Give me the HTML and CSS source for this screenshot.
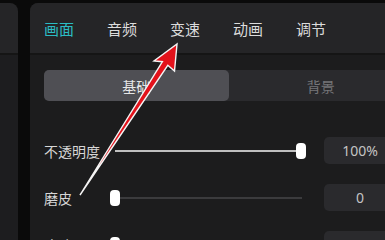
FILE: index.html
```html
<!DOCTYPE html>
<html lang="zh">
<head>
<meta charset="utf-8">
<link rel="stylesheet" href="styles.css">
</head>
<body>
<div class="app">
  <div class="side">
    <div class="side-head"></div>
    <div class="side-body"></div>
  </div>
  <div class="main">
    <div class="tabs">
      <span class="tab active">画面</span>
      <span class="tab">音频</span>
      <span class="tab">变速</span>
      <span class="tab">动画</span>
      <span class="tab">调节</span>
    </div>
    <div class="content">
      <div class="segment">
        <div class="seg on">基础</div>
        <div class="seg">背景</div>
      </div>
      <div class="rows">
        <div class="row">
          <span class="label">不透明度</span>
          <div class="slider">
            <div class="track full"></div>
            <div class="knob end"></div>
          </div>
          <div class="value">100%</div>
        </div>
        <div class="row">
          <span class="label">磨皮</span>
          <div class="slider">
            <div class="track"></div>
            <div class="knob"></div>
          </div>
          <div class="value">0</div>
        </div>
        <div class="row">
          <span class="label">瘦脸</span>
          <div class="slider">
            <div class="track"></div>
            <div class="knob"></div>
          </div>
          <div class="value">0</div>
        </div>
      </div>
    </div>
  </div>
</div>
<svg class="arrow" width="385" height="240" viewBox="0 0 385 240">
  <polygon points="80,195 167.8,65.3 174.5,71 177,44 154,61 162.4,61.7" fill="#e3121b" stroke="#f4f4f4" stroke-width="1.4" stroke-linejoin="miter"/>
</svg>
</body>
</html>
```
FILE: styles.css
```css
html, body {
  margin: 0;
  padding: 0;
  width: 385px;
  height: 240px;
  overflow: hidden;
  background: #0a0a0a;
  font-family: "Noto Sans CJK SC", "Noto Sans", sans-serif;
}
.app {
  display: flex;
  height: 240px;
  padding-top: 3px;
  box-sizing: border-box;
}
.side {
  width: 18px;
  flex: none;
  border-top-right-radius: 8px;
  overflow: hidden;
  display: flex;
  flex-direction: column;
}
.side-head {
  flex: none;
  height: 50px;
  background: #252527;
  border-bottom: 2px solid #151515;
}
.side-body {
  flex: 1;
  background: #1d1d1f;
}
.main {
  margin-left: 12px;
  flex: 1;
  min-width: 0;
  border-top-left-radius: 8px;
  overflow: hidden;
  background: #1c1c1d;
  display: flex;
  flex-direction: column;
}
.tabs {
  flex: none;
  height: 50px;
  background: #252527;
  border-bottom: 2px solid #151515;
  display: flex;
  align-items: center;
  padding-left: 14px;
  gap: 33px;
}
.tab {
  font-size: 15px;
  color: #dcdcdc;
  line-height: 1;
}
.tab.active {
  color: #2bbcc4;
}
.content {
  flex: none;
  padding: 15px 0 0 14px;
}
.segment {
  width: 369px;
  height: 31px;
  background: #2a2a2d;
  border-radius: 5px;
  display: flex;
}
.seg {
  flex: 1;
  display: flex;
  align-items: center;
  justify-content: center;
  font-size: 14px;
  color: #767679;
  border-radius: 5px;
}
.seg.on {
  background: #4f4f54;
  color: #e6e6e6;
}
.rows {
  margin-top: 36px;
  display: flex;
  flex-direction: column;
  gap: 20px;
}
.row {
  display: flex;
  align-items: center;
  height: 27px;
}
.label {
  width: 66px;
  flex: none;
  font-size: 14px;
  color: #d6d6d6;
  line-height: 1;
}
.slider {
  width: 196px;
  flex: none;
  height: 16px;
  display: flex;
  align-items: center;
  position: relative;
}
.track {
  position: absolute;
  left: 5px;
  right: 4px;
  height: 2px;
  background: #3b3b3d;
}
.track.full {
  background: #bfbfbf;
}
.knob {
  position: absolute;
  left: 0;
  width: 10px;
  height: 16px;
  background: #ffffff;
  border-radius: 4px;
}
.knob.end {
  left: 186px;
}
.value {
  flex: none;
  margin-left: 18px;
  width: 72px;
  height: 27px;
  background: #2a2a2d;
  border-radius: 5px;
  color: #c4c4c4;
  font-size: 14px;
  display: flex;
  align-items: center;
  justify-content: center;
  font-family: "Noto Sans", sans-serif;
}
.arrow {
  position: absolute;
  left: 0;
  top: 0;
  pointer-events: none;
}
```
